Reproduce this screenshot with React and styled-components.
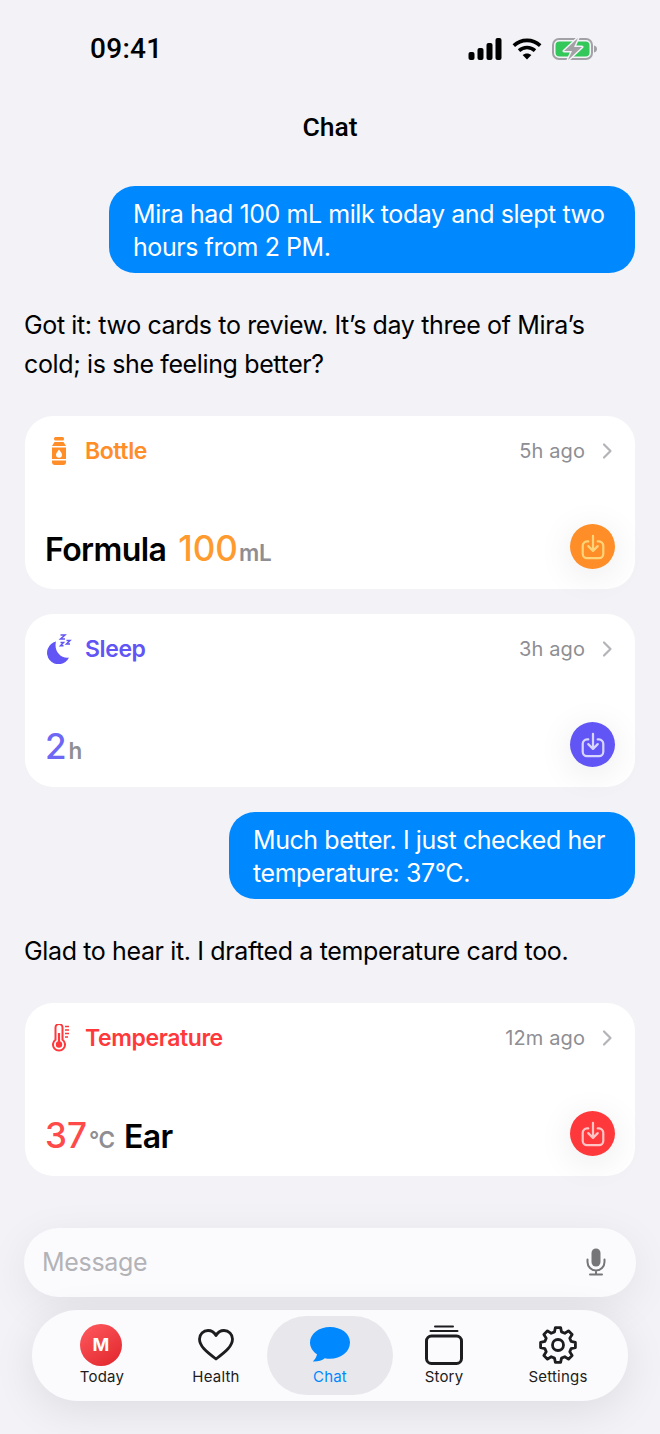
import React from 'react';
import styled, { createGlobalStyle } from 'styled-components';

const colors = {
  page: '#f2f2f7',
  blue: '#0088ff',
  orange: '#ff8d28',
  orangeValue: '#ff9a2e',
  purple: '#6155f5',
  purpleValue: '#6e66f5',
  red: '#ff383c',
  redValue: '#ff4a4a',
  grey: '#8e8e93',
  ink: '#000',
};

const GlobalStyle = createGlobalStyle`
  html, body {
    margin: 0;
    padding: 0;
    background: ${colors.page};
  }
  * { box-sizing: border-box; }
`;

const Page = styled.div`
  width: 660px;
  height: 1434px;
  overflow: hidden;
  position: relative;
  display: flex;
  flex-direction: column;
  background: ${colors.page};
  font-family: Inter, 'Liberation Sans', sans-serif;
  color: ${colors.ink};
`;

const StatusBar = styled.div`
  height: 98px;
  padding: 31px 62px 0 90px;
  display: flex;
  justify-content: space-between;
  align-items: flex-start;
`;

const Time = styled.div`
  font-family: Roboto, sans-serif;
  font-size: 28px;
  line-height: 36px;
  font-weight: 500;
  letter-spacing: 0.3px;
`;

const StatusIcons = styled.div`
  display: flex;
  align-items: center;
  gap: 10px;
  height: 36px;
`;

const Title = styled.h1`
  margin: 0;
  height: 58px;
  font-family: Roboto, sans-serif;
  font-size: 26.5px;
  line-height: 58px;
  font-weight: 500;
  text-align: center;
`;

const Thread = styled.main`
  padding: 30px 25px 0;
  display: flex;
  flex-direction: column;
`;

const UserBubble = styled.div`
  align-self: flex-end;
  width: ${p => p.$width}px;
  height: 87px;
  margin-bottom: ${p => p.$below}px;
  padding: 12px 24px 0;
  background: ${colors.blue};
  border-radius: 26px;
  color: #fff;
  font-size: 25px;
  line-height: 32.5px;
  letter-spacing: -0.43px;
`;

const Reply = styled.p`
  margin: 0 0 ${p => p.$below}px -1px;
  font-size: 25px;
  line-height: 39px;
  letter-spacing: -0.37px;
`;

const Card = styled.section`
  height: 173px;
  margin-bottom: ${p => p.$below}px;
  padding: 0 20px;
  background: #fff;
  border-radius: 28px;
  display: flex;
  flex-direction: column;
`;

const CardHeader = styled.header`
  height: 69px;
  display: flex;
  align-items: center;
`;

const CardIcon = styled.span`
  width: 28px;
  margin-right: 12px;
  display: flex;
  justify-content: center;
  color: ${p => p.$color};
`;

const CardName = styled.span`
  flex: 1;
  font-size: 23px;
  font-weight: 600;
  letter-spacing: -0.4px;
  color: ${p => p.$color};
`;

const CardAge = styled.span`
  font-size: 20px;
  color: ${colors.grey};
  letter-spacing: 0.1px;
  margin-right: 16px;
`;

const Chevron = styled.svg`
  width: 12px;
  height: 18px;
  margin-right: 2px;
`;

const CardBody = styled.div`
  flex: 1;
  display: flex;
  align-items: flex-start;
  justify-content: space-between;
  padding-top: 39px;
`;

const Reading = styled.div`
  display: flex;
  align-items: baseline;
  line-height: 46px;
  height: 46px;
  margin-top: 1px;
`;

const Label = styled.span`
  font-size: 32px;
  font-weight: 600;
  letter-spacing: -0.6px;
  margin: ${p => p.$margin || '0'};
`;

const Value = styled.span`
  font-size: 35px;
  font-weight: 500;
  color: ${p => p.$color};
`;

const Unit = styled.span`
  font-size: 22.5px;
  font-weight: 600;
  letter-spacing: -0.3px;
  color: ${colors.grey};
  margin-left: ${p => p.$gap}px;
`;

const SaveButton = styled.button`
  width: 45px;
  height: 45px;
  padding: 0;
  border: 0;
  border-radius: 50%;
  background: ${p => p.$color};
  box-shadow: 0 6px 36px rgba(0, 0, 0, 0.09);
  display: flex;
  align-items: center;
  justify-content: center;
`;

const Dock = styled.div`
  position: absolute;
  left: 0;
  right: 0;
  top: 1228px;
  display: flex;
  flex-direction: column;
  align-items: center;
`;

const InputBar = styled.div`
  width: 612px;
  height: 69px;
  padding: 0 30px 2px 18px;
  display: flex;
  align-items: center;
  justify-content: space-between;
  background: #fbfbfe;
  border-radius: 35px;
  box-shadow: 0 10px 44px rgba(0, 0, 0, 0.07);
  font-size: 25px;
  letter-spacing: -0.3px;
  color: #b3b3b7;
`;

const TabBar = styled.nav`
  width: 596px;
  height: 91px;
  margin-top: 13px;
  padding: 6px 0;
  display: grid;
  grid-template-columns: repeat(5, 114px);
  justify-content: center;
  background: #fbfbfe;
  border-radius: 46px;
  box-shadow: 0 10px 44px rgba(0, 0, 0, 0.09);
`;

const Tab = styled.div`
  margin: ${p => (p.$active ? '0 -6px' : '0')};
  display: flex;
  flex-direction: column;
  align-items: center;
  border-radius: 40px;
  background: ${p => (p.$active ? '#e8e8ec' : 'transparent')};
  color: ${p => (p.$active ? colors.blue : '#1d1d20')};
  font-size: 15px;
  font-weight: 400;
  letter-spacing: 0.2px;
`;

const TabIcon = styled.span`
  height: 46px;
  margin: 6px 0 -1px;
  display: flex;
  align-items: center;
  justify-content: center;
`;

const Avatar = styled.span`
  width: 42px;
  height: 42px;
  margin: -1px 2px 0 0;
  border-radius: 50%;
  background: linear-gradient(145deg, #ff5a5f, #e0252b);
  color: #fff;
  font-size: 18px;
  font-weight: 700;
  display: flex;
  align-items: center;
  justify-content: center;
`;

// eight rounded teeth, walked round the centre of the 38 box
const gearPoints = Array.from({ length: 8 }, (_, i) => {
  const mid = (i * 45 - 90) * (Math.PI / 180);
  return [[13.6, -15], [17.6, -8.5], [17.6, 8.5], [13.6, 15]]
    .map(([r, deg]) => {
      const a = mid + deg * (Math.PI / 180);
      return `${(19 + r * Math.cos(a)).toFixed(2)},${(19 + r * Math.sin(a)).toFixed(2)}`;
    })
    .join(' ');
}).join(' ');

const SignalIcon = () => (
  <svg width="34" height="22" viewBox="0 0 34 22">
    <rect x="0.5" y="14" width="6" height="8" rx="2" fill="#000" />
    <rect x="9.5" y="10" width="6" height="12" rx="2" fill="#000" />
    <rect x="18.5" y="5" width="6" height="17" rx="2" fill="#000" />
    <rect x="27.5" y="0" width="6" height="22" rx="2" fill="#000" />
  </svg>
);

const WifiIcon = () => (
  <svg width="30" height="22" viewBox="0 0 30 22" fill="none" stroke="#000" strokeWidth="3.6">
    <path d="M1.8 7.6C9.2 .6 20.8 .6 28.2 7.6" />
    <path d="M7 12.6C11.6 8.4 18.4 8.4 23 12.6" />
    <path d="M15 21.5 10.6 17.1C13 14.9 17 14.9 19.4 17.1Z" fill="#000" stroke="none" />
  </svg>
);

const BatteryIcon = () => (
  <svg width="46" height="24" viewBox="0 0 46 24">
    <rect x="1" y="2" width="39" height="20" rx="6" fill="none" stroke="#a2a2a6" strokeWidth="2" />
    <rect x="3.500" y="4.500" width="34" height="15" rx="4" fill="#34c759" />
    <path d="M42 8.500c2 .4 3 1.600 3 3.500s-1 3.100-3 3.500Z" fill="#a2a2a6" />
    <path d="M26 1 12 14h8L16 23l14-13h-8Z" fill="#a2a2a6" stroke={colors.page} strokeWidth="3" paintOrder="stroke" strokeLinejoin="round" />
  </svg>
);

const BottleIcon = () => (
  <svg width="16" height="28" viewBox="0 0 16 28" fill="currentColor">
    <rect x="3" y="0" width="10" height="3.500" rx="1.500" />
    <path d="M3.500 5h9l2.500 4H1Z" />
    <path fillRule="evenodd" d="M1 10.500h14V22H1ZM8 12.500c-1.800 2.400-3 3.800-3 5.200a3 3 0 0 0 6 0c0-1.400-1.200-2.800-3-5.200Z" />
    <path d="M1 23.500h14V25a3 3 0 0 1-3 3H4a3 3 0 0 1-3-3Z" />
  </svg>
);

const SleepIcon = () => (
  <svg width="26" height="30" viewBox="0 0 26 30" fill="currentColor">
    <path d="M10 7.500a11.500 11.500 0 1 0 13 16C15 25 7.500 17 10 7.500Z" />
    <g fill="none" stroke="currentColor" strokeWidth="1.500">
      <path d="M14.500 1h4.500l-4.500 4h4.500" />
      <path d="M20.500 6.500h3.500l-3.500 3.500h3.500" />
      <path d="M14.500 8.500h3l-3 3.200h3" />
    </g>
  </svg>
);

const ThermometerIcon = () => (
  <svg width="22" height="28" viewBox="-4 0 22 28" fill="none" stroke="currentColor">
    <path d="M3.500 3.500a3.500 3.500 0 0 1 7 0v12.200a6 6 0 1 1-7 0Z" strokeWidth="2" />
    <circle cx="7" cy="20.500" r="3.200" fill="currentColor" stroke="none" />
    <path d="M7 9v10" strokeWidth="2.200" />
    <path d="M13 2.500h4M13 6h4M13 9.500h4M13 13h3" strokeWidth="1.500" />
  </svg>
);

const ChevronRight = () => (
  <Chevron viewBox="0 0 12 18" fill="none" stroke="#b4b4b8" strokeWidth="2.200" strokeLinecap="round" strokeLinejoin="round">
    <path d="M3 2.500 9.500 9 3 15.500" />
  </Chevron>
);

const SaveIcon = ({ stroke }) => (
  <svg width="24" height="26" viewBox="0 0 28 30" fill="none" stroke={stroke} strokeWidth="2.600" strokeLinecap="round" strokeLinejoin="round">
    <path d="M8.500 8.500H7a5 5 0 0 0-5 5V23a5 5 0 0 0 5 5h14a5 5 0 0 0 5-5v-9.500a5 5 0 0 0-5-5h-1.500" />
    <path d="M14 2v17M8.500 14l5.500 5.500 5.500-5.500" />
  </svg>
);

const MicIcon = () => (
  <svg width="20" height="28" viewBox="0 0 20 28">
    <rect x="5.500" y="0.500" width="9" height="18" rx="4.500" fill="#767679" />
    <path d="M1.500 11.500v2.500a8.500 8.500 0 0 0 17 0v-2.500M10 22.500v4M4 26.500h12" fill="none" stroke="#767679" strokeWidth="2" strokeLinecap="round" />
  </svg>
);

const HeartIcon = () => (
  <svg width="36" height="32" viewBox="0 0 36 32" fill="none" stroke="#1d1d20" strokeWidth="2.800" strokeLinejoin="round">
    <path d="M18 30C8 22.500 1.500 17 1.500 10A8.500 8.500 0 0 1 10 1.500c3.500 0 6.300 1.800 8 5 1.700-3.200 4.500-5 8-5A8.500 8.500 0 0 1 34.500 10C34.500 17 28 22.500 18 30Z" />
  </svg>
);

const ChatIcon = () => (
  <svg width="40" height="36" viewBox="0 0 40 36" fill={colors.blue}>
    <path d="M20 0C9 0 0 6.800 0 15.500c0 4.800 2.800 9 7 11.800-.4 2.400-1.800 5-4.200 7.200 4.500.3 9-1 12-3.300 1.700.4 3.400.5 5.200.5 11 0 20-7 20-16.200S31 0 20 0Z" />
  </svg>
);

const StoryIcon = () => (
  <svg width="38" height="40" viewBox="0 0 38 40" fill="none" stroke="#1d1d20" strokeLinecap="round">
    <path d="M10 1.500h18" strokeWidth="2" />
    <path d="M5.500 6h27" strokeWidth="2" />
    <rect x="1.500" y="11" width="35" height="27.500" rx="5" strokeWidth="3" />
  </svg>
);

const GearIcon = () => (
  <svg width="38" height="38" viewBox="0 0 38 38" fill="none" stroke="#1d1d20" strokeWidth="2.800" strokeLinejoin="round">
    <polygon points={gearPoints} />
    <circle cx="19" cy="19" r="5.500" />
  </svg>
);

const App = () => {
  return (
    <Page>
      <GlobalStyle />
      <StatusBar>
        <Time>09:41</Time>
        <StatusIcons>
          <SignalIcon />
          <WifiIcon />
          <BatteryIcon />
        </StatusIcons>
      </StatusBar>
      <Title>Chat</Title>

      <Thread>
        <UserBubble $width={526} $below={33}>
          Mira had 100 mL milk today and slept two hours from 2 PM.
        </UserBubble>
        <Reply $below={32}>
          Got it: two cards to review. It’s day three of Mira’s cold; is she feeling better?
        </Reply>

        <Card $below={25}>
          <CardHeader>
            <CardIcon $color={colors.orange}><BottleIcon /></CardIcon>
            <CardName $color={colors.orange}>Bottle</CardName>
            <CardAge>5h ago</CardAge>
            <ChevronRight />
          </CardHeader>
          <CardBody>
            <Reading>
              <Label $margin="0 12px 0 0">Formula</Label>
              <Value $color={colors.orangeValue}>100</Value>
              <Unit $gap={1}>mL</Unit>
            </Reading>
            <SaveButton $color={colors.orange}><SaveIcon stroke="#ffd479" /></SaveButton>
          </CardBody>
        </Card>

        <Card $below={25}>
          <CardHeader>
            <CardIcon $color={colors.purple}><SleepIcon /></CardIcon>
            <CardName $color={colors.purple}>Sleep</CardName>
            <CardAge>3h ago</CardAge>
            <ChevronRight />
          </CardHeader>
          <CardBody>
            <Reading>
              <Value $color={colors.purpleValue}>2</Value>
              <Unit $gap={2}>h</Unit>
            </Reading>
            <SaveButton $color={colors.purple}><SaveIcon stroke="#d8d6ff" /></SaveButton>
          </CardBody>
        </Card>

        <UserBubble $width={406} $below={33}>
          Much better. I just checked her temperature: 37°C.
        </UserBubble>
        <Reply $below={32}>Glad to hear it. I drafted a temperature card too.</Reply>

        <Card $below={0}>
          <CardHeader>
            <CardIcon $color={colors.red}><ThermometerIcon /></CardIcon>
            <CardName $color={colors.red}>Temperature</CardName>
            <CardAge>12m ago</CardAge>
            <ChevronRight />
          </CardHeader>
          <CardBody>
            <Reading>
              <Value $color={colors.redValue}>37</Value>
              <Unit $gap={2}>°C</Unit>
              <Label $margin="0 0 0 9px">Ear</Label>
            </Reading>
            <SaveButton $color={colors.red}><SaveIcon stroke="#ffc4c4" /></SaveButton>
          </CardBody>
        </Card>
      </Thread>

      <Dock>
        <InputBar>
          Message
          <MicIcon />
        </InputBar>
        <TabBar>
          <Tab>
            <TabIcon><Avatar>M</Avatar></TabIcon>
            Today
          </Tab>
          <Tab>
            <TabIcon><HeartIcon /></TabIcon>
            Health
          </Tab>
          <Tab $active>
            <TabIcon><ChatIcon /></TabIcon>
            Chat
          </Tab>
          <Tab>
            <TabIcon><StoryIcon /></TabIcon>
            Story
          </Tab>
          <Tab>
            <TabIcon><GearIcon /></TabIcon>
            Settings
          </Tab>
        </TabBar>
      </Dock>
    </Page>
  );
};

export default App;
